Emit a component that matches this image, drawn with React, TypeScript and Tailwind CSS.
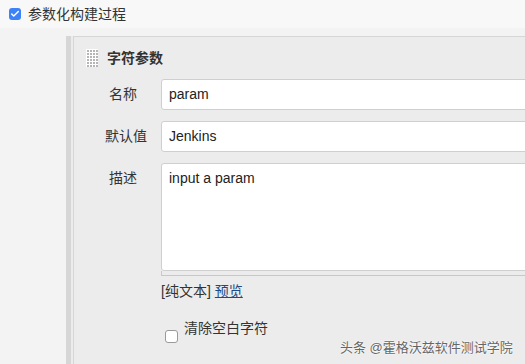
import { Check } from 'lucide-react';

const font = { fontFamily: '"Liberation Sans", "Noto Sans CJK SC", sans-serif' };

// 拖动手柄：浅色方块上的点阵
function DragHandle() {
  const dots = [];
  for (let r = 0; r < 6; r++) {
    for (let c = 0; c < 4; c++) {
      dots.push(<rect key={`${r}-${c}`} x={1 + c * 3} y={1 + r * 3} width="2" height="2" fill="#b5b5b5" />);
    }
  }
  return (
    <svg width="12" height="18" viewBox="0 0 12 18" className="shrink-0 bg-white">
      {dots}
    </svg>
  );
}

export default function App() {
  return (
    <div
      className="relative w-[525px] h-[364px] overflow-hidden bg-[#f3f3f3] text-[#333] text-[14px]"
      style={font}
    >
      {/* Header */}
      <div className="h-[28px] bg-[#f8f8f8] flex items-center pl-[9px] gap-[7px]">
        <div className="w-[12px] h-[12px] rounded-[3px] bg-[#3d82f7] flex items-center justify-center">
          <Check size={10} strokeWidth={3.5} className="text-white" />
        </div>
        <span className="leading-none">参数化构建过程</span>
      </div>

      {/* Body */}
      <div className="flex pl-[66px] pt-[8px] h-[336px]">
        <div className="w-[5px] bg-[#d6d6d6] shrink-0" />
        <div className="w-[2px] bg-[#ececec] shrink-0" />
        <div className="flex-1 border-l border-t border-[#d6d6d6] bg-[#ececec] pl-[12px] pt-[12px]">
          <div className="flex items-center gap-[9px] h-[18px]">
            <DragHandle />
            <span className="font-bold leading-none">字符参数</span>
          </div>

          <div className="mt-[12px] pl-[23px] flex flex-col">
            <div className="flex items-center">
              <span className="w-[52px] shrink-0">名称</span>
              <div className="flex-1 h-[31px] -mr-[20px] bg-white border border-[#cfcfcf] rounded-[3px] flex items-center pl-[7px] text-[#222]">
                param
              </div>
            </div>

            <div className="flex items-center mt-[11px]">
              <span className="w-[52px] shrink-0 -ml-[4px] mr-[4px]">默认值</span>
              <div className="flex-1 h-[31px] -mr-[20px] bg-white border border-[#cfcfcf] rounded-[3px] flex items-center pl-[7px] text-[#222]">
                Jenkins
              </div>
            </div>

            <div className="flex items-start mt-[11px]">
              <span className="w-[52px] shrink-0 pt-[5px]">描述</span>
              <div className="flex-1 -mr-[20px] flex flex-col">
                <div className="h-[108px] bg-white border border-[#cfcfcf] rounded-[3px] pl-[7px] pt-[4px] text-[#222]">
                  input a param
                </div>
                <div className="h-[5px] border-l border-b border-[#c8c8c8] bg-[#ececec]" />
                <div className="mt-[5px] h-[20px] flex items-center">
                  <span>[纯文本]</span>
                  <span className="ml-[4px] text-[#204a87] underline">预览</span>
                </div>
              </div>
            </div>

            <div className="flex items-start mt-[20px] pl-[56px]">
              <div className="w-[13px] h-[13px] mt-[9px] rounded-[3px] bg-white border border-[#9a9a9a]" />
              <span className="ml-[6px] leading-none">清除空白字符</span>
            </div>
          </div>
        </div>
      </div>

      {/* Watermark */}
      <div
        className="absolute left-[340px] top-[339px] text-[13px] text-[#666] leading-[18px] whitespace-nowrap"
        style={{ textShadow: '0 0 2px #fff, 0 0 2px #fff' }}
      >
        头条 @霍格沃兹软件测试学院
      </div>
    </div>
  );
}
